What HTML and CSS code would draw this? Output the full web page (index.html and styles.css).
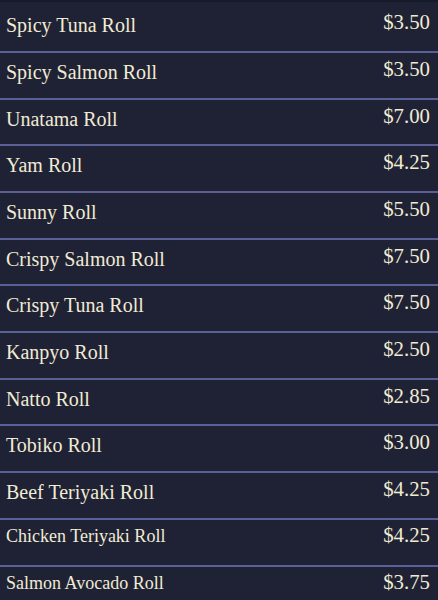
FILE: index.html
```html
<!DOCTYPE html>
<html>
<head>
<meta charset="utf-8">
<link rel="stylesheet" href="styles.css">
</head>
<body>
<div class="menu">
  <div class="row"><span class="name">Spicy Tuna Roll</span><span class="price">$3.50</span></div>
  <div class="row"><span class="name">Spicy Salmon Roll</span><span class="price">$3.50</span></div>
  <div class="row"><span class="name">Unatama Roll</span><span class="price">$7.00</span></div>
  <div class="row"><span class="name">Yam Roll</span><span class="price">$4.25</span></div>
  <div class="row"><span class="name">Sunny Roll</span><span class="price">$5.50</span></div>
  <div class="row"><span class="name">Crispy Salmon Roll</span><span class="price">$7.50</span></div>
  <div class="row"><span class="name">Crispy Tuna Roll</span><span class="price">$7.50</span></div>
  <div class="row"><span class="name">Kanpyo Roll</span><span class="price">$2.50</span></div>
  <div class="row"><span class="name">Natto Roll</span><span class="price">$2.85</span></div>
  <div class="row"><span class="name">Tobiko Roll</span><span class="price">$3.00</span></div>
  <div class="row"><span class="name">Beef Teriyaki Roll</span><span class="price">$4.25</span></div>
  <div class="row small"><span class="name">Chicken Teriyaki Roll</span><span class="price">$4.25</span></div>
  <div class="row small"><span class="name">Salmon Avocado Roll</span><span class="price">$3.75</span></div>
</div>
</body>
</html>
```

FILE: styles.css
```css
html, body {
  margin: 0;
  padding: 0;
  background: #1f2235;
}
body {
  width: 438px;
  height: 600px;
  overflow: hidden;
  border-top: 2px solid #171a29;
  box-sizing: border-box;
}
.menu {
  padding-top: 4.3px;
  font-family: "Liberation Serif", "Times New Roman", serif;
  color: #f1ebd3;
}
.row {
  height: 44.7px;
  border-bottom: 2px solid #5a5f96;
  display: flex;
  justify-content: space-between;
  align-items: flex-start;
  padding: 0 8px 0 6px;
}
.name {
  font-size: 20px;
  line-height: 20px;
  padding-top: 9px;
}
.price {
  font-size: 20.8px;
  line-height: 20px;
  padding-top: 6px;
}
.row.small .name {
  font-size: 18px;
  padding-top: 6px;
}
.row.small .price {
  padding-top: 5px;
}
```
